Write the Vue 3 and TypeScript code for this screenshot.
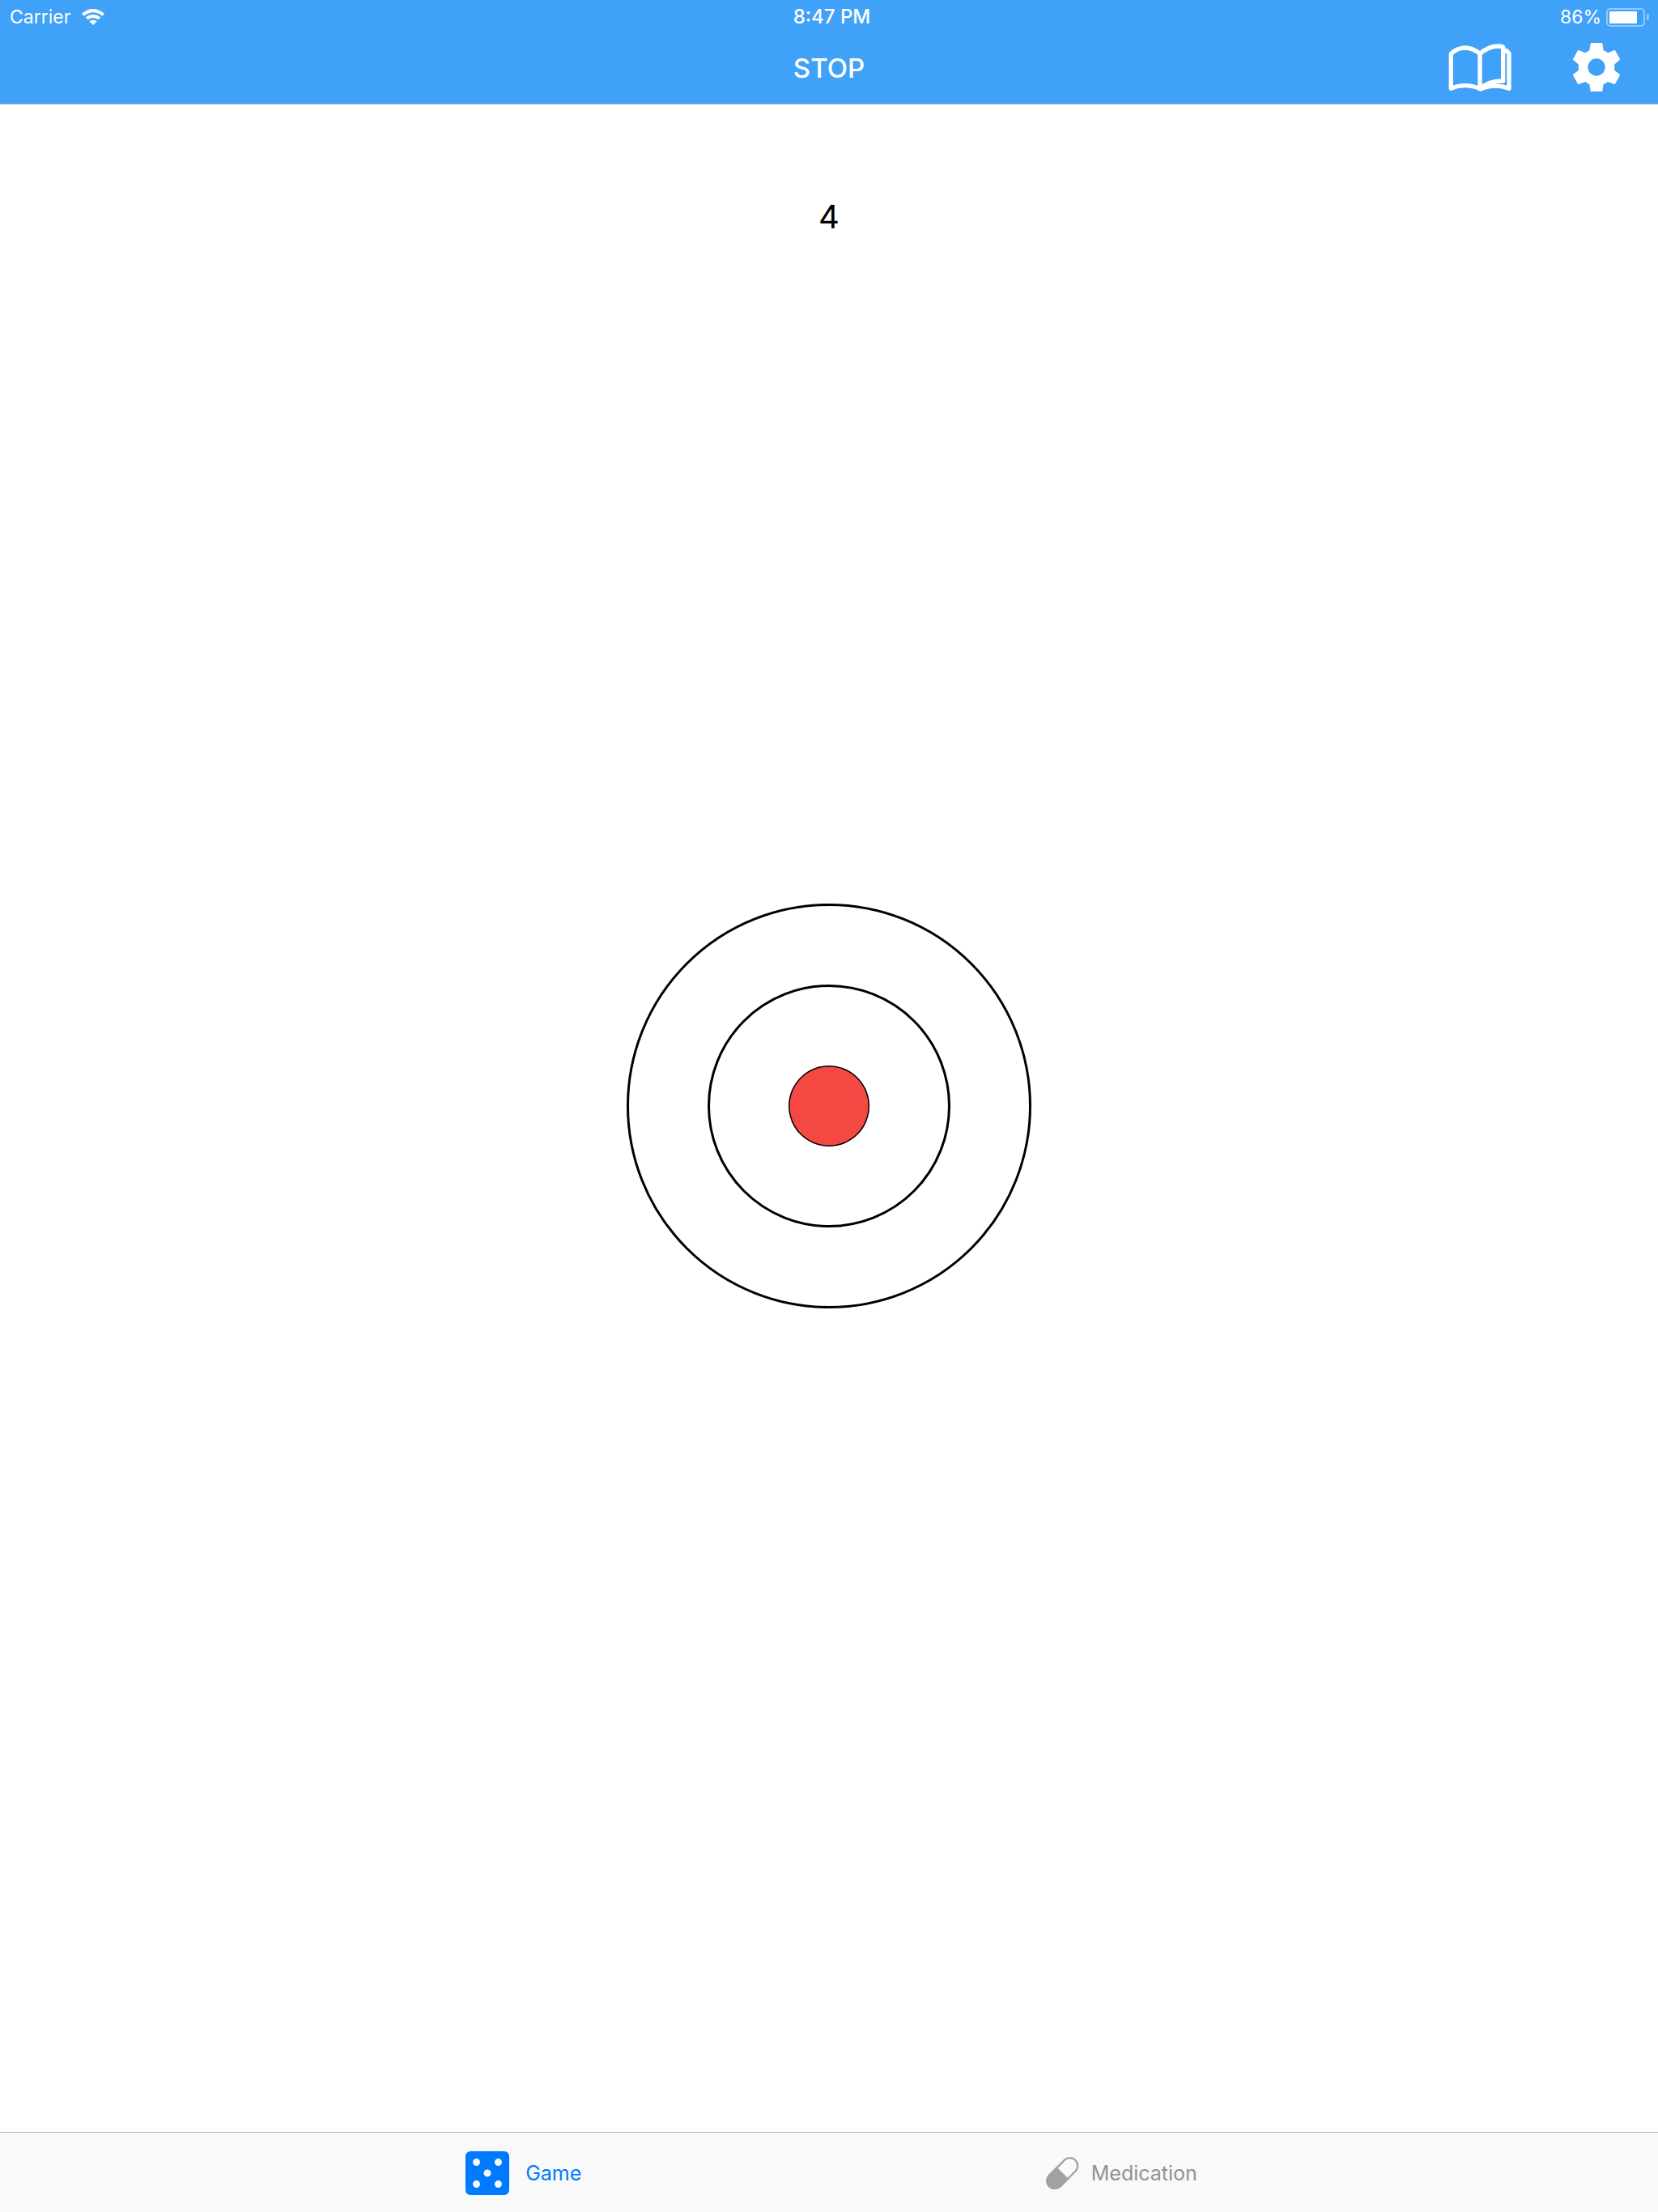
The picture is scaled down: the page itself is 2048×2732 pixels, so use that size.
<script setup lang="ts">
import { ref } from 'vue'

type Tab = 'game' | 'medication'

const count = ref<number>(4)
const battery = ref<number>(86)
const activeTab = ref<Tab>('game')

function hit(): void {
  count.value += 1
}
</script>

<template>
  <div class="screen">
    <header class="top">
      <div class="status">
        <div class="status-left">
          <span>Carrier</span>
          <svg class="wifi" viewBox="303 30 84 60" aria-hidden="true">
            <path d="M303 47 Q345 13 387 47 L379 56 Q345 29 311 56Z" />
            <path d="M317 61 Q345 39 373 61 L364 70 Q345 56 326 70Z" />
            <path d="M331 76 Q345 66 359 76 L345 90Z" />
          </svg>
        </div>
        <time class="clock">8:47 PM</time>
        <div class="status-right">
          <span>{{ battery }}%</span>
          <span class="battery">
            <span class="cell"><span class="charge" :style="{ width: battery + '%' }"></span></span>
            <span class="nub"></span>
          </span>
        </div>
      </div>
      <div class="bar">
        <h1 class="title">STOP</h1>
        <div class="actions">
          <button class="action" type="button" aria-label="Guide">
            <svg class="book" viewBox="84 150 240 195" aria-hidden="true">
              <path d="M204 196 Q178 174 148 174 Q120 175 97 196 V325 Q122 314 149 314 Q177 314 204 326 V196 Q236 168 272 168 Q281 168 290 171 V297 Q240 295 206 325" />
              <path d="M297 180 L312 195 V325 Q287 315 262 315 Q232 316 206 327 Q232 308 262 307" />
            </svg>
          </button>
          <button class="action" type="button" aria-label="Settings">
            <svg class="gear" viewBox="546 156 180 186" aria-hidden="true">
              <path
                fill-rule="evenodd"
                d="M616 159 H656 Q658 159 658 161 L662 187 Q671 191 679 196 L702 186 Q704 185 705 187 L723 219 Q724 221 722 222 L702 239 Q704 249 702 260 L722 275 Q724 276 723 278 L705 311 Q704 313 702 312 L679 303 Q671 309 662 312 L658 337 Q658 339 656 339 H616 Q614 339 614 337 L610 312 Q602 309 595 303 L570 312 Q568 313 567 311 L549 278 Q548 276 550 275 L570 260 Q568 249 570 239 L550 222 Q548 221 549 219 L567 187 Q568 185 570 186 L595 196 Q602 191 610 187 L614 161 Q614 159 616 159Z M636 217 A32 32 0 1 0 636 281 A32 32 0 1 0 636 217Z"
              />
            </svg>
          </button>
        </div>
      </div>
    </header>

    <main class="play">
      <output class="count">{{ count }}</output>
      <button class="target" type="button" aria-label="Target" @click="hit">
        <svg viewBox="0 0 500 500" aria-hidden="true">
          <circle class="ring" cx="250" cy="250" r="248.5" />
          <circle class="ring" cx="250" cy="250" r="148.5" />
          <circle class="outline" cx="250" cy="250" r="50" />
          <circle class="bull" cx="250" cy="250" r="48.5" />
        </svg>
      </button>
    </main>

    <nav class="tabs">
      <button class="tab wide" type="button" :class="{ active: activeTab === 'game' }" @click="activeTab = 'game'">
        <svg class="die" viewBox="0 0 54 54" aria-hidden="true">
          <path
            fill-rule="evenodd"
            d="M6 0H48A6 6 0 0 1 54 6V48A6 6 0 0 1 48 54H6A6 6 0 0 1 0 48V6A6 6 0 0 1 6 0Z M9 13.5a4.5 4.5 0 1 0 9 0a4.5 4.5 0 1 0 -9 0Z M36 13.5a4.5 4.5 0 1 0 9 0a4.5 4.5 0 1 0 -9 0Z M22.500 27a4.500 4.500 0 1 0 9 0a4.500 4.500 0 1 0 -9 0Z M9 40.500a4.500 4.500 0 1 0 9 0a4.500 4.500 0 1 0 -9 0Z M36 40.500a4.500 4.500 0 1 0 9 0a4.500 4.500 0 1 0 -9 0Z"
          />
        </svg>
        <span>Game</span>
      </button>
      <button class="tab" type="button" :class="{ active: activeTab === 'medication' }" @click="activeTab = 'medication'">
        <svg class="pill" viewBox="63 131 120 120" aria-hidden="true">
          <path class="half" d="M102.400 167.400 L147.600 212.600 L117.600 242.600 A32 32 0 0 1 72.400 197.400Z" />
          <path class="shell" d="M74.500 199.500 L131.500 142.500 A29 29 0 0 1 172.500 183.500 L115.500 240.500 A29 29 0 0 1 74.500 199.500Z" />
        </svg>
        <span>Medication</span>
      </button>
    </nav>
  </div>
</template>

<style>
body {
  margin: 0;
}
</style>

<style scoped>
.screen {
  display: flex;
  flex-direction: column;
  min-height: 100vh;
  background: #fff;
  color: #000;
  font-family: Inter, Roboto, 'Liberation Sans', sans-serif;
}

button {
  margin: 0;
  padding: 0;
  border: 0;
  background: none;
  color: inherit;
  font: inherit;
  cursor: pointer;
}

svg {
  display: block;
  overflow: visible;
}

.top {
  background: #40a1f9;
  border-bottom: 1px solid #a8abae;
  color: #fff;
}

.status {
  display: grid;
  grid-template-columns: 1fr auto 1fr;
  align-items: center;
  height: 38px;
  padding: 2px 11px 0 12px;
  font-size: 23px;
  line-height: 38px;
}

.status-left,
.status-right {
  display: flex;
  align-items: center;
  gap: 14px;
}

.status-right {
  justify-content: flex-end;
  gap: 6px;
}

.clock {
  padding-left: 6px;
  font-size: 24px;
  font-weight: 500;
}

.wifi {
  width: 28px;
  height: 20px;
  fill: #fff;
}

.battery {
  display: flex;
  align-items: center;
  gap: 2px;
}

.cell {
  box-sizing: border-box;
  width: 48px;
  height: 23px;
  padding: 2px;
  border: 2px solid #93c9fb;
  border-radius: 5px;
}

.charge {
  display: block;
  height: 15px;
  border-radius: 1px;
  background: #fff;
}

.nub {
  width: 3px;
  height: 8px;
  border-radius: 0 4px 4px 0;
  background: #93c9fb;
}

.bar {
  display: grid;
  grid-template-columns: 1fr auto 1fr;
  align-items: center;
  height: 88px;
  padding: 0 46px;
}

.title {
  grid-column: 2;
  margin: 0;
  font-size: 33px;
  font-weight: 500;
  line-height: 40px;
}

.actions {
  display: flex;
  align-items: center;
  justify-content: flex-end;
  gap: 74px;
  padding-bottom: 2px;
}

.book {
  width: 80px;
  height: 65px;
  fill: none;
  stroke: #fff;
  stroke-width: 16px;
  stroke-linejoin: round;
}

.gear {
  width: 60px;
  height: 62px;
  fill: #fff;
}

.play {
  flex: 1;
  display: grid;
  grid-template-rows: 1fr auto 1fr;
  justify-items: center;
  padding-bottom: 30px;
}

.count {
  padding-top: 115px;
  font-size: 40px;
  line-height: 48px;
}

.target {
  grid-row: 2;
  width: 500px;
  height: 500px;
  border-radius: 50%;
}

.ring {
  fill: none;
  stroke: #000;
  stroke-width: 3px;
}

.outline {
  fill: #000;
}

.bull {
  fill: #f44842;
}

.tabs {
  display: flex;
  justify-content: center;
  gap: 28vw;
  height: 96px;
  padding: 2px 0 0 6px;
  border-top: 1px solid #b2b2b2;
  background: #f9f9f9;
}

.tab {
  display: flex;
  align-items: center;
  gap: 16px;
  color: #929292;
  font-size: 25px;
  line-height: 32px;
}

.wide {
  gap: 20px;
}

.active {
  color: #007aff;
}

.die {
  width: 54px;
  height: 54px;
  fill: currentColor;
}

.pill {
  width: 40px;
  height: 40px;
}

.half {
  fill: #a1a1a1;
}

.shell {
  fill: none;
  stroke: #a1a1a1;
  stroke-width: 7px;
}
</style>
